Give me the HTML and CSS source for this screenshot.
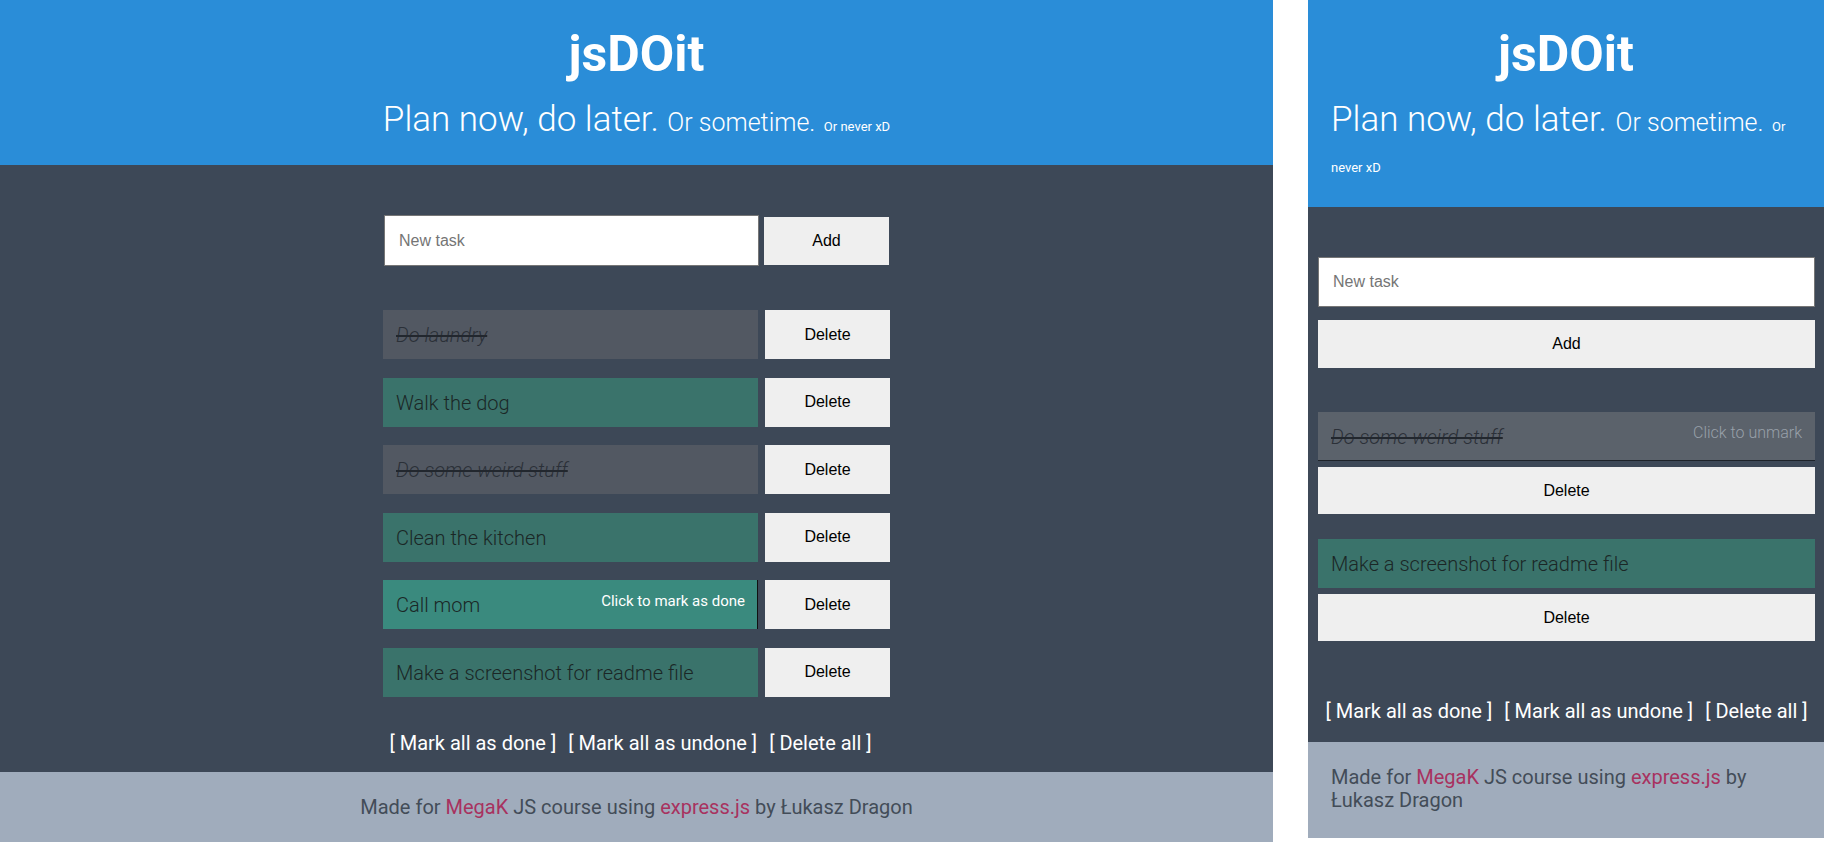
FILE: index.html
```html
<!DOCTYPE html>
<html lang="en">
<head>
<meta charset="utf-8">
<title>jsDOit</title>
<link rel="stylesheet" href="styles.css">
</head>
<body>
<div class="screens">
  <div class="app app--wide">
    <header class="hero">
      <h1 class="hero__title">jsDOit</h1>
      <h2 class="hero__tagline">Plan now, do later. <span class="tag-md">Or sometime.</span> <span class="tag-sm">Or never xD</span></h2>
    </header>
    <main class="board">
      <div class="column">
        <form class="add-form">
          <input class="add-form__input" type="text" placeholder="New task">
          <button class="btn add-form__btn" type="button">Add</button>
        </form>
        <ul class="tasks">
          <li class="task"><div class="task__label task__label--done">Do laundry</div><button class="btn task__delete" type="button">Delete</button></li>
          <li class="task"><div class="task__label">Walk the dog</div><button class="btn task__delete" type="button">Delete</button></li>
          <li class="task"><div class="task__label task__label--done">Do some weird stuff</div><button class="btn task__delete" type="button">Delete</button></li>
          <li class="task"><div class="task__label">Clean the kitchen</div><button class="btn task__delete" type="button">Delete</button></li>
          <li class="task"><div class="task__label task__label--hover">Call mom<span class="task__hint">Click to mark as done</span></div><button class="btn task__delete" type="button">Delete</button></li>
          <li class="task"><div class="task__label">Make a screenshot for readme file</div><button class="btn task__delete" type="button">Delete</button></li>
        </ul>
        <div class="bulk"><a class="bulk__link">[ Mark all as done ]</a><a class="bulk__link">[ Mark all as undone ]</a><a class="bulk__link">[ Delete all ]</a></div>
      </div>
    </main>
    <footer class="credits">Made for <a class="credits__link">MegaK</a> JS course using <a class="credits__link">express.js</a> by Łukasz Dragon</footer>
  </div>

  <div class="app app--narrow">
    <header class="hero">
      <h1 class="hero__title">jsDOit</h1>
      <h2 class="hero__tagline">Plan now, do later. <span class="tag-md">Or sometime.</span> <span class="tag-sm">Or never xD</span></h2>
    </header>
    <main class="board">
      <div class="column">
        <form class="add-form">
          <input class="add-form__input" type="text" placeholder="New task">
          <button class="btn add-form__btn" type="button">Add</button>
        </form>
        <ul class="tasks">
          <li class="task"><div class="task__label task__label--done task__label--done-hover">Do some weird stuff<span class="task__hint task__hint--muted">Click to unmark</span></div><button class="btn task__delete" type="button">Delete</button></li>
          <li class="task"><div class="task__label">Make a screenshot for readme file</div><button class="btn task__delete" type="button">Delete</button></li>
        </ul>
        <div class="bulk"><a class="bulk__link">[ Mark all as done ]</a><a class="bulk__link">[ Mark all as undone ]</a><a class="bulk__link">[ Delete all ]</a></div>
      </div>
    </main>
    <footer class="credits">Made for <a class="credits__link">MegaK</a> JS course using <a class="credits__link">express.js</a> by Łukasz Dragon</footer>
  </div>
</div>
</body>
</html>
```

FILE: styles.css
```css
* { box-sizing: border-box; }

html, body {
  margin: 0;
  padding: 0;
  background: #ffffff;
}

body {
  font-family: Roboto, "Liberation Sans", Arial, sans-serif;
}

.screens {
  display: flex;
  gap: 35px;
  width: 1824px;
  height: 842px;
  overflow: hidden;
}

.app {
  display: flex;
  flex-direction: column;
  background: #3d4857;
}

.app--wide {
  width: 1273px;
  height: 842px;
  overflow: hidden;
}

.app--narrow {
  width: 516px;
  height: 838px;
  overflow: hidden;
}

/* Header */
.hero {
  background: #2a8dd8;
  color: #ffffff;
  display: flex;
  flex-direction: column;
  align-items: center;
  padding: 24px 23px 25px;
  flex: none;
}

.app--narrow .hero {
  height: 207px;
}

.app--wide .hero {
  height: 165px;
}

.hero__title {
  margin: 0;
  font-size: 50px;
  font-weight: 700;
  line-height: 61px;
}

.hero__tagline {
  margin: 14px 0 0;
  font-size: 35px;
  font-weight: 300;
  line-height: 41px;
  text-align: left;
}

.tag-md {
  font-size: 25px;
  font-weight: 300;
  line-height: 1;
}

.tag-sm {
  font-size: 13px;
  font-weight: 400;
  line-height: 1;
}

/* Main board */
.board {
  display: flex;
  justify-content: center;
  flex: none;
}

.app--wide .board {
  padding: 50px 0 0;
  height: 607px;
}

.app--narrow .board {
  padding: 50px 9px 0 10px;
  height: 535px;
}

.column {
  display: flex;
  flex-direction: column;
}

.app--wide .column {
  width: 507px;
}

.app--narrow .column {
  width: 100%;
}

.btn {
  font-family: "Liberation Sans", Arial, sans-serif;
  font-size: 16px;
  color: #000000;
  background: #efefef;
  border: none;
  padding: 0;
  cursor: pointer;
}

/* Add form */
.add-form {
  display: flex;
  margin: 0;
}

.app--wide .add-form {
  align-items: center;
  gap: 5px;
  padding-left: 1px;
}

.app--narrow .add-form {
  flex-direction: column;
  gap: 13px;
}

.add-form__input {
  font-family: "Liberation Sans", Arial, sans-serif;
  font-size: 16px;
  background: #ffffff;
  border: 1px solid #767676;
  padding: 0 14px;
  color: #000;
  outline: none;
}

.add-form__input::placeholder {
  color: #757575;
}

.app--wide .add-form__input {
  width: 375px;
  height: 51px;
}

.app--narrow .add-form__input {
  width: 100%;
  height: 50px;
}

.app--wide .add-form__btn {
  width: 125px;
  height: 48px;
}

.app--narrow .add-form__btn {
  width: 100%;
  height: 48px;
}

/* Tasks */
.tasks {
  list-style: none;
  margin: 44px 0 0;
  padding: 0;
  display: flex;
  flex-direction: column;
}

.app--wide .tasks {
  gap: 18.6px;
}

.app--narrow .tasks {
  gap: 25px;
}

.task {
  display: flex;
}

.app--wide .task {
  gap: 7px;
  height: 49px;
}

.app--narrow .task {
  flex-direction: column;
  gap: 6px;
}

.task__label {
  position: relative;
  background: #3a736b;
  color: #1b2726;
  font-size: 20px;
  font-weight: 300;
  padding: 2px 13px 0;
  line-height: 47px;
  height: 49px;
  white-space: nowrap;
}

.app--wide .task__label {
  width: 375px;
}

.task__label--done {
  background: #525862;
  color: #2b3038;
  font-style: italic;
  text-decoration: line-through;
  text-decoration-thickness: 2px;
  text-decoration-color: #22272e;
}

.task__label--hover {
  background: #3a8a7e;
}

.app--wide .task__label--hover {
  border-right: 1px solid #111111;
}

.task__label--done-hover {
  background: #5b626b;
  border-bottom: 1px solid #1e232a;
}

.task__hint {
  position: absolute;
  right: 12px;
  top: 12px;
  font-size: 15px;
  font-weight: 400;
  font-style: normal;
  line-height: 18px;
  color: #ffffff;
  display: inline-block;
  text-decoration: none;
}

.task__hint--muted {
  right: 13px;
  color: #98a0a9;
  font-weight: 300;
  font-size: 16px;
}

.app--wide .task__delete {
  width: 125px;
  height: 49px;
}

.app--narrow .task__delete {
  width: 100%;
  height: 47px;
}

/* Bulk actions */
.bulk {
  display: flex;
  justify-content: center;
  gap: 12px;
  font-size: 20px;
  line-height: 24px;
  color: #ffffff;
  white-space: nowrap;
}

.app--wide .bulk {
  margin-top: 34px;
  padding-right: 12px;
}

.app--narrow .bulk {
  margin-top: 58px;
}

.bulk__link {
  color: #ffffff;
  cursor: pointer;
}

/* Footer */
.credits {
  background: #a0acbc;
  color: #434c58;
  font-size: 20px;
  line-height: 23px;
  padding: 24px 23px;
  flex: none;
}

.app--wide .credits {
  text-align: center;
}

.app--narrow .credits {
  text-align: left;
  height: 96px;
}

.credits__link {
  color: #a8325f;
  text-decoration: none;
}
```
